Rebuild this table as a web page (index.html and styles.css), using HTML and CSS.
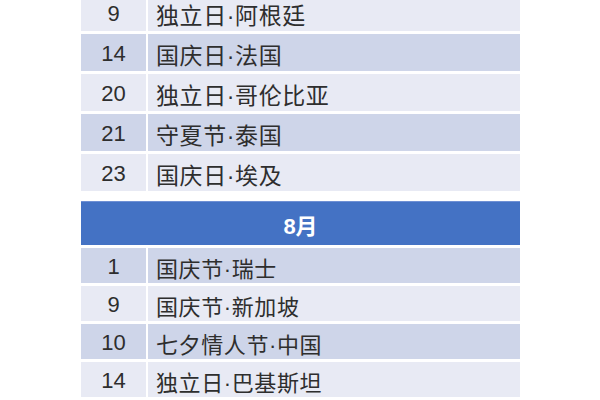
FILE: index.html
```html
<!DOCTYPE html>
<html lang="zh-CN">
<head>
<meta charset="utf-8">
<link rel="stylesheet" href="styles.css">
</head>
<body>
<div class="table">
  <div class="row light upper"><div class="num">9</div><div class="txt">独立日·阿根廷</div></div>
  <div class="row dark upper"><div class="num">14</div><div class="txt">国庆日·法国</div></div>
  <div class="row light upper"><div class="num">20</div><div class="txt">独立日·哥伦比亚</div></div>
  <div class="row dark upper"><div class="num">21</div><div class="txt">守夏节·泰国</div></div>
  <div class="row light upper"><div class="num">23</div><div class="txt">国庆日·埃及</div></div>
  <div class="month">8月</div>
  <div class="row dark lower"><div class="num">1</div><div class="txt">国庆节·瑞士</div></div>
  <div class="row light lower"><div class="num">9</div><div class="txt">国庆节·新加坡</div></div>
  <div class="row dark lower"><div class="num">10</div><div class="txt">七夕情人节·中国</div></div>
  <div class="row light lower"><div class="num">14</div><div class="txt">独立日·巴基斯坦</div></div>
</div>
</body>
</html>
```

FILE: styles.css
```css
html, body {
  margin: 0;
  padding: 0;
  background: #ffffff;
  overflow: hidden;
}
body {
  width: 600px;
  height: 400px;
}
.table {
  display: flex;
  flex-direction: column;
  gap: 3px;
  width: 439px;
  margin-left: 81px;
  margin-top: -6px;
}
.row {
  display: grid;
  grid-template-columns: 65px 1fr;
  column-gap: 2px;
  color: #2e2e2e;
}
.upper { height: 37px; }
.lower { height: 35px; }
.num, .txt {
  display: flex;
  align-items: center;
}
.num {
  justify-content: center;
  font-family: "Liberation Sans", Arial, sans-serif;
  font-size: 22px;
  padding-top: 2px;
}
.txt {
  padding-left: 8px;
  padding-top: 2px;
  font-family: "Liberation Sans", "Noto Sans CJK SC", sans-serif;
  font-size: 22px;
  letter-spacing: 0.6px;
}
.upper .txt {
  font-size: 23px;
}
.light .num, .light .txt { background: #e8eaf4; }
.dark .num, .dark .txt { background: #ced5e9; }
.month {
  margin-top: 7px;
  height: 44px;
  background: #4472c4;
  border-top: 1px solid #6f90d4;
  box-sizing: border-box;
  color: #ffffff;
  font-family: "Liberation Sans", "Noto Sans CJK SC", sans-serif;
  font-weight: bold;
  font-size: 22px;
  display: flex;
  align-items: center;
  justify-content: center;
}
```
